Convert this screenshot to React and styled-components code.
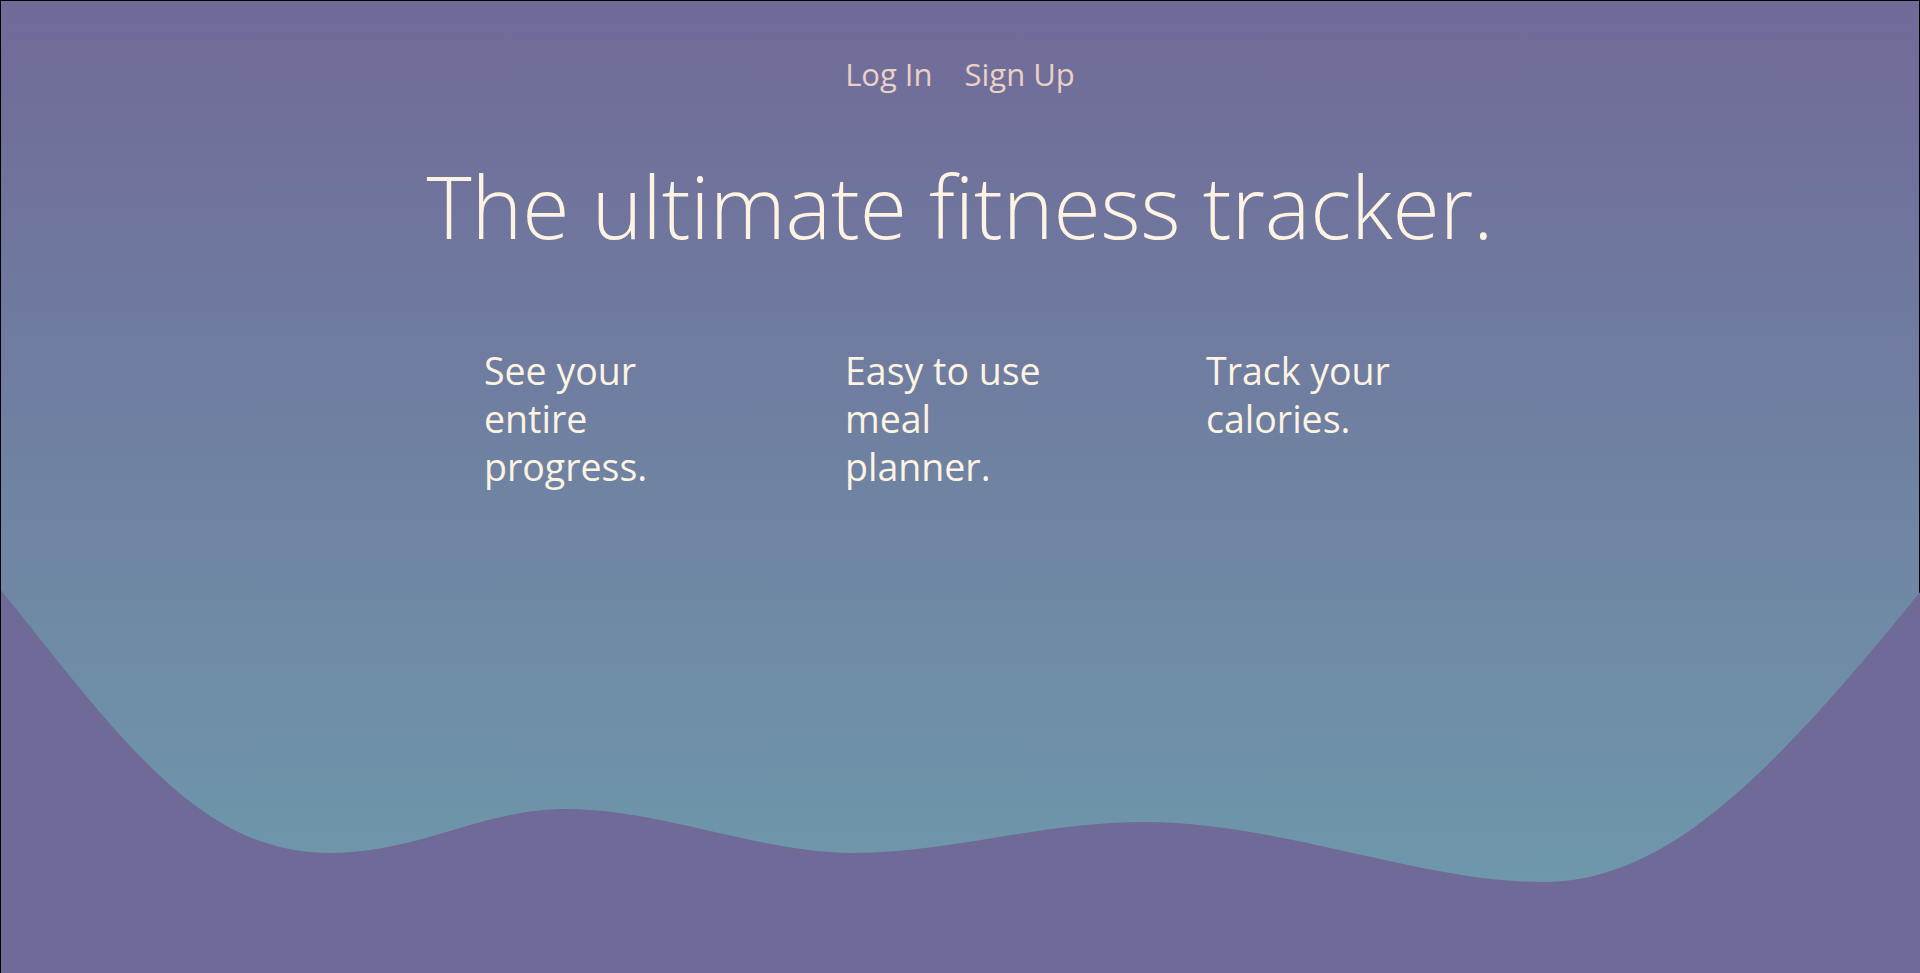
import React from 'react'
import styled, { createGlobalStyle } from 'styled-components'

const GlobalStyle = createGlobalStyle`
  html, body {
    margin: 0;
    padding: 0;
  }
  body {
    font-family: "Open Sans", "Noto Sans", sans-serif;
  }
  * {
    box-sizing: border-box;
  }
`

const Page = styled.div`
  min-height: 100vh;
  display: flex;
  flex-direction: column;
  align-items: center;
  border: 1px solid #000;
  border-bottom: none;
  padding-top: 55px;
  background: linear-gradient(180deg, #706a98 0%, #6e9cad 100%);
`

const Nav = styled.nav`
  display: flex;
  gap: 32px;
  justify-content: center;
`

const NavLink = styled.a`
  font-size: 31px;
  line-height: 36px;
  color: #ecd0c6;
  text-decoration: none;
  cursor: pointer;
`

const Title = styled.h1`
  margin: 62px 0 0;
  font-size: 86px;
  line-height: 1.2;
  font-weight: 300;
  letter-spacing: -0.1px;
  color: #fdf3e3;
  text-align: center;
`

const Features = styled.div`
  display: grid;
  grid-template-columns: repeat(3, 230px);
  column-gap: 131px;
  margin-top: 90px;
`

const Feature = styled.p`
  margin: 0;
  font-size: 37.5px;
  line-height: 48px;
  color: #fdf3e3;
`

const Wave = styled.svg`
  display: block;
  align-self: flex-start;
  margin-top: auto;
  width: calc(100% + 1px);
  height: 383px;
  flex-shrink: 0;
`

const features = [
  'See your entire progress.',
  'Easy to use meal planner.',
  'Track your calories.',
]

export default function App() {
  return (
    <>
      <GlobalStyle />
      <Page>
        <Nav>
          <NavLink>Log In</NavLink>
          <NavLink>Sign Up</NavLink>
        </Nav>
        <Title>The ultimate fitness tracker.</Title>
        <Features>
          {features.map((f) => (
            <Feature key={f}>{f}</Feature>
          ))}
        </Features>
        <Wave viewBox="0 0 1920 383" preserveAspectRatio="none">
          <path
            fill="#706a98"
            d="M0,0 C120,150 200,263 328,263 C420,263 480,219 566,219 C660,219 760,263 851,263 C950,263 1040,232 1144,232 C1280,232 1420,292 1542,292 C1660,292 1760,200 1920,2 L1920,383 L0,383 Z"
          />
        </Wave>
      </Page>
    </>
  )
}
